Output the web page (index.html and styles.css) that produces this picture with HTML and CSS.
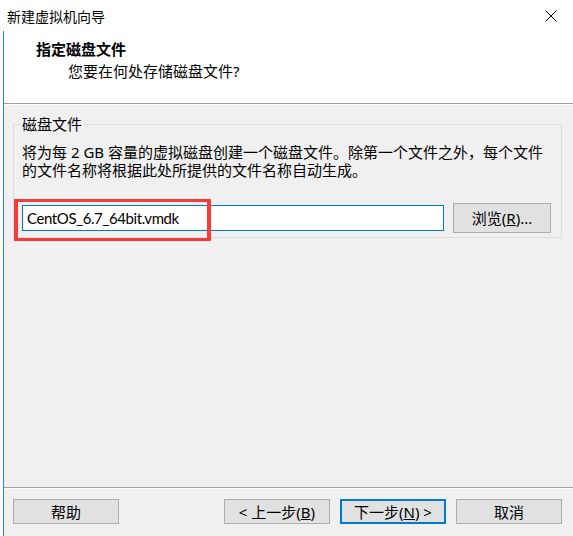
FILE: index.html
```html
<!DOCTYPE html>
<html lang="zh-CN">
<head>
  <meta charset="UTF-8">
  <title>新建虚拟机向导</title>
  <link rel="stylesheet" href="styles.css">
</head>
<body>

  <div class="window">
    <div class="titlebar">
      <span class="title">新建虚拟机向导</span>
      <svg class="close" width="12" height="12" viewBox="0 0 12 12">
        <path d="M0.5 0.5 L11.5 11.5 M11.5 0.5 L0.5 11.5" stroke="#000" stroke-width="1" fill="none"/>
      </svg>
    </div>

    <div class="frame">
      <div class="header">
        <div class="headtitle">指定磁盘文件</div>
        <div class="headsub">您要在何处存储磁盘文件?</div>
      </div>

      <div class="content">
        <fieldset class="group">
          <legend>磁盘文件</legend>
          <p class="desc">将为每 2 GB 容量的虚拟磁盘创建一个磁盘文件。除第一个文件之外，每个文件的文件名称将根据此处所提供的文件名称自动生成。</p>
          <div class="filerow">
            <input class="filename" type="text" value="CentOS_6.7_64bit.vmdk">
            <button class="btn browse">浏览(<u>R</u>)...</button>
            <span class="mark"></span>
          </div>
        </fieldset>
      </div>

      <div class="footer">
        <button class="btn help">帮助</button>
        <button class="btn">&lt; 上一步(<u>B</u>)</button>
        <button class="btn default">下一步(<u>N</u>) &gt;</button>
        <button class="btn">取消</button>
      </div>
    </div>
  </div>

</body>
</html>
```

FILE: styles.css
```css
body {
 margin: 0;
 width: 573px;
 height: 536px;
 overflow: hidden;
 background-color: #fff;
 font-family: "Noto Sans", "Noto Sans CJK SC", sans-serif;
 font-size: 15px;
 color: #000;
}
.window {
 display: flex;
 flex-direction: column;
 height: 536px;
}
.titlebar {
 height: 31px;
 display: flex;
 align-items: center;
 padding-left: 7px;
 background-color: #fff;
 font-size: 14px;
}
.close {
 margin-left: auto;
 margin-right: 16px;
}
.frame {
 flex: 1;
 display: flex;
 flex-direction: column;
 margin-left: 3px;
 border-left: 1px solid #2f7fd3;
 background-color: #f0f0f0;
}
.header {
 height: 64px;
 padding: 8px 0 0 32px;
 background-color: #fff;
 border-bottom: 1px solid #a0a0a0;
}
.headtitle {
 font-weight: 700;
 line-height: 20px;
}
.headsub {
 margin-top: 2px;
 padding-left: 32px;
 line-height: 21px;
}
.content {
 flex: 1;
 padding: 10px 11px 0 9px;
 box-shadow: inset 0 1px #fff;
}
.group {
 margin: 0;
 padding: 0 10px 4px 8px;
 border: 1px solid #dcdcdc;
}
.group legend {
 padding: 0 2px;
 margin-left: -2px;
 line-height: 20px;
}
.desc {
 margin: 9px 0 0 0;
 line-height: 18px;
}
.filerow {
 position: relative;
 display: flex;
 align-items: center;
 gap: 9px;
 margin-top: 24px;
}
.filename {
 flex: 1;
 height: 26px;
 box-sizing: border-box;
 margin: 0;
 padding: 0 4px;
 border: 1px solid #0078d7;
 background-color: #fff;
 font-family: Lato, "Noto Sans", sans-serif;
 font-size: 15px;
 letter-spacing: -0.4px;
 color: #000;
 outline: none;
}
.btn {
 width: 106px;
 height: 25px;
 box-sizing: border-box;
 margin: 0;
 padding: 0;
 border: 1px solid #adadad;
 background-color: #e1e1e1;
 font: inherit;
 color: #000;
 line-height: 20px;
}
.browse {
 width: 98px;
 height: 30px;
}
.default {
 border: 2px solid #0078d7;
}
.mark {
 position: absolute;
 left: -8px;
 top: -4px;
 width: 197px;
 height: 42px;
 box-sizing: border-box;
 border-style: solid;
 border-color: #f23d3d;
 border-width: 3px 4px;
}
.footer {
 display: flex;
 gap: 10px;
 padding: 11px 11px 12px 9px;
 border-top: 1px solid #a0a0a0;
 box-shadow: inset 0 1px #fff;
}
.help {
 margin-right: auto;
}
```
